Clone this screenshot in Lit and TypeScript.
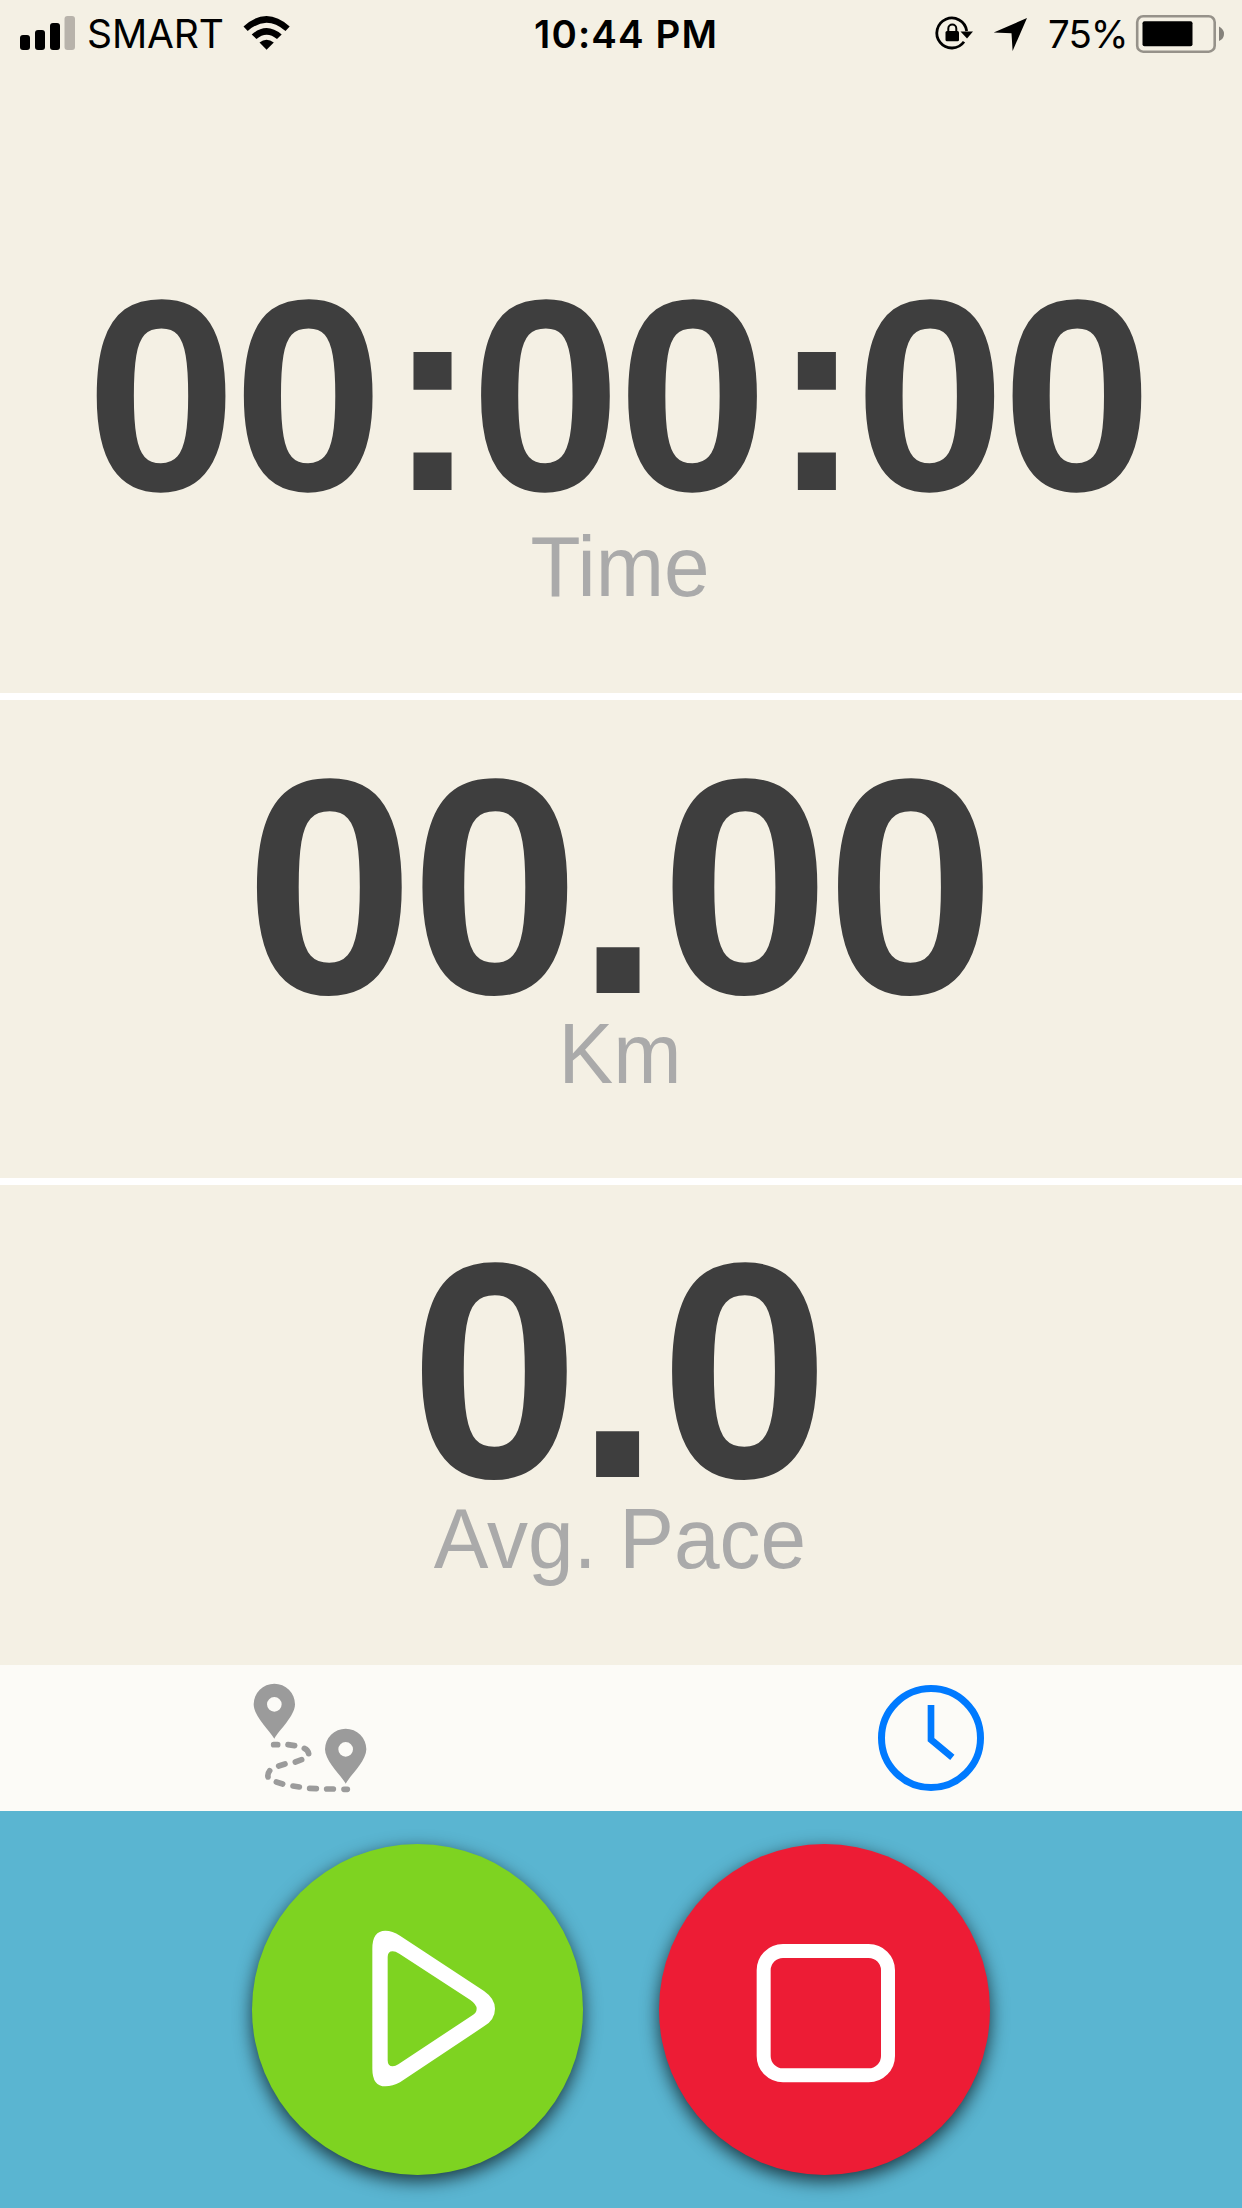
import { LitElement, html, css, svg } from "lit";
import { customElement, property } from "lit/decorators.js";

@customElement("status-bar")
class StatusBar extends LitElement {
  static styles = css`
    :host { display: flex; height: 68px; box-sizing: border-box; color: #000; font: 400 38.5px/68px Inter, "Liberation Sans", sans-serif; white-space: nowrap; }
    svg { display: block; flex: none; height: 68px; }
    .left { display: flex; width: 534px; }
    .signal { width: 87px; }
    .carrier { width: 155px; font-size: 39px; letter-spacing: -0.1px; }
    .wifi { width: 50px; }
    .clock { width: 390px; font-weight: 600; letter-spacing: 1.1px; }
    .right { display: flex; }
    .lock { width: 66px; }
    .arrow { width: 58px; }
    .percent { width: 86px; letter-spacing: -1px; }
    .battery { width: 94px; }
  `;
  render() {
    return html`
      <div class="left">
        <svg class="signal" viewBox="0 0 87 68">
          <rect x="20" y="35" width="10" height="15" rx="3"/><rect x="35" y="30" width="10" height="20" rx="3"/>
          <rect x="50" y="23" width="10" height="27" rx="3"/><rect x="64.500" y="16" width="10.500" height="34" rx="3" fill="#b8b3ab"/>
        </svg>
        <span class="carrier">SMART</span>
        <svg class="wifi" viewBox="242 0 50 68">
          <path d="M243.500 26.500Q266.500 5.500 289.700 26.500L285.500 31Q266.500 14.500 247.700 31Z"/>
          <path d="M251.700 34.500Q266.500 21.500 281.700 34.500L277 39Q266.500 30.500 256.500 39Z"/>
          <path d="M259.500 42.500Q266.500 37 273.800 42.500L266.600 49.800Z"/>
        </svg>
      </div>
      <span class="clock">10:44 PM</span>
      <div class="right">
        <svg class="lock" viewBox="924 0 66 68">
          <path d="M964 41.800A15 15 0 1 1 966.700 31" fill="none" stroke="#000" stroke-width="2.800"/>
          <path d="M960.500 31.500H973L967 38.500Z"/>
          <rect x="945.500" y="31" width="13.500" height="10.300" rx="1.500"/>
          <path d="M948.300 32V28.500a4 4 0 0 1 8 0V32" fill="none" stroke="#000" stroke-width="2"/>
        </svg>
        <svg class="arrow" viewBox="990 0 58 68"><path d="M1027 18L993.700 32.600L1011.500 33.300L1012.600 51Z"/></svg>
        <span class="percent">75%</span>
        <svg class="battery" viewBox="1134 0 94 68">
          <rect x="1137.200" y="16.200" width="77.500" height="35.500" rx="6" fill="none" stroke="#96928a" stroke-width="2.600"/>
          <rect x="1142.500" y="21.300" width="50" height="25" rx="2"/>
          <path d="M1219 26.500Q1224 29 1224 34T1219 41Z" fill="#85827b"/>
        </svg>
      </div>`;
  }
}

@customElement("metric-panel")
class MetricPanel extends LitElement {
  @property() value = "";
  @property() label = "";
  // A line height of 0.693em puts the baseline on the lower edge of the box.
  static styles = css`
    :host { display: flex; flex-direction: column; align-items: center; box-sizing: border-box; padding-right: 2px; font-family: "Liberation Sans", Arial, sans-serif; }
    .value, .label { line-height: 0.693; white-space: nowrap; transform-origin: 50% 100%; }
    .value { margin-right: 4px; font-size: var(--value-size, 297px); font-weight: 700; color: #3e3e3e; letter-spacing: -0.0125em; transform: scale(1.025, 1.035); }
    .mark { letter-spacing: 0; margin: 0 calc(-1 * var(--mark-shift, 0px)) 0 var(--mark-shift, 0px); }
    .label { margin-top: var(--label-gap, 34px); font-size: 82px; color: #aaa; transform: scaleY(1.03); }
  `;
  render() {
    return html`
      <div class="value">${this.value.split(/([:.])/).map((part, i) => (i % 2 ? html`<span class="mark">${part}</span>` : part))}</div>
      <div class="label">${this.label}</div>`;
  }
}

const pin = (x: number, y: number) => svg`
  <path fill-rule="evenodd" transform="translate(${x} ${y})"
    d="M0 103C-14 78 -62 35 -62 0A62 62 0 0 1 62 0C62 35 14 78 0 103ZM22 0A22 22 0 1 0 -22 0A22 22 0 1 0 22 0Z"/>`;

@customElement("app-root")
class AppRoot extends LitElement {
  static styles = css`
    :host { display: flex; flex-direction: column; width: 1242px; height: 2208px; background: #f4f0e4; overflow: hidden; }
    .panel { border-bottom: 7px solid #fff; flex: none; }
    .time { height: 632px; padding-top: 240px; --value-size: 264px; --label-gap: 49px; --mark-shift: 7px; }
    .distance { height: 485px; padding-top: 88px; --label-gap: 33px; }
    .pace { height: 480px; padding-top: 87px; border-bottom: 0; }
    .tabs { display: flex; flex: none; height: 146px; box-sizing: border-box; background: #fcfbf7; padding-right: 1px; }
    .tab { flex: 1; display: flex; align-items: center; justify-content: center; }
    .route { width: 114px; height: 110px; margin: 0 1px 1px 0; fill: #9b9b9b; }
    .clock { width: 106px; height: 106px; }
    .actions { flex: 1; display: flex; justify-content: center; align-items: flex-start; gap: 76px; padding-top: 33px; background: #5ab5d1; }
    .button { width: 331px; height: 331px; padding: 0; border: 0; border-radius: 50%; box-shadow: 0 6px 18px rgba(0, 0, 0, 0.7); }
    .button svg { display: block; width: 331px; height: 331px; }
    .play { background: #7ed321; }
    .stop { background: #ed1c35; }
  `;
  render() {
    return html`
      <status-bar></status-bar>
      <metric-panel class="panel time" value="00:00:00" label="Time"></metric-panel>
      <metric-panel class="panel distance" value="00.00" label="Km"></metric-panel>
      <metric-panel class="panel pace" value="0.0" label="Avg. Pace"></metric-panel>
      <nav class="tabs">
        <div class="tab">
          <svg class="route" viewBox="68 83 342 330">
            ${pin(132, 147)}${pin(346, 282)}
            <path fill="none" stroke="#9b9b9b" stroke-width="17" stroke-linecap="round"
              d="M130 268H142M173 268L193 271M222 279Q233 284 235 295M195 320L214 313M145 332L164 326M118 346Q111 355 113 365M138 380L157 386M188 392L207 395M238 399L258 400M289 401H309M341 402H351"/>
          </svg>
        </div>
        <div class="tab">
          <svg class="clock" viewBox="53 90 318 318" fill="none" stroke="#007aff" stroke-width="21">
            <circle cx="212" cy="249" r="148.500"/>
            <path d="M212 150V254L276 307" stroke-width="20"/>
          </svg>
        </div>
      </nav>
      <div class="actions">
        <button class="button play">
          <svg viewBox="66 71 993 993">
            <path fill="#fff" fill-rule="evenodd" d="M427 385Q427 331 466 331Q487 331 510 346L762 512Q795 535 795 565Q795 598 762 618L510 786Q488 798 466 798Q427 798 427 745ZM473 410Q473 393 488 393Q496 393 508 400L720 538Q740 552 740 565Q740 578 725 586L505 732Q496 738 488 738Q473 738 473 720Z"/>
          </svg>
        </button>
        <button class="button stop">
          <svg viewBox="57 71 993 993">
            <rect x="371" y="392" width="373" height="373" rx="58" fill="none" stroke="#fff" stroke-width="42"/>
          </svg>
        </button>
      </div>`;
  }
}
